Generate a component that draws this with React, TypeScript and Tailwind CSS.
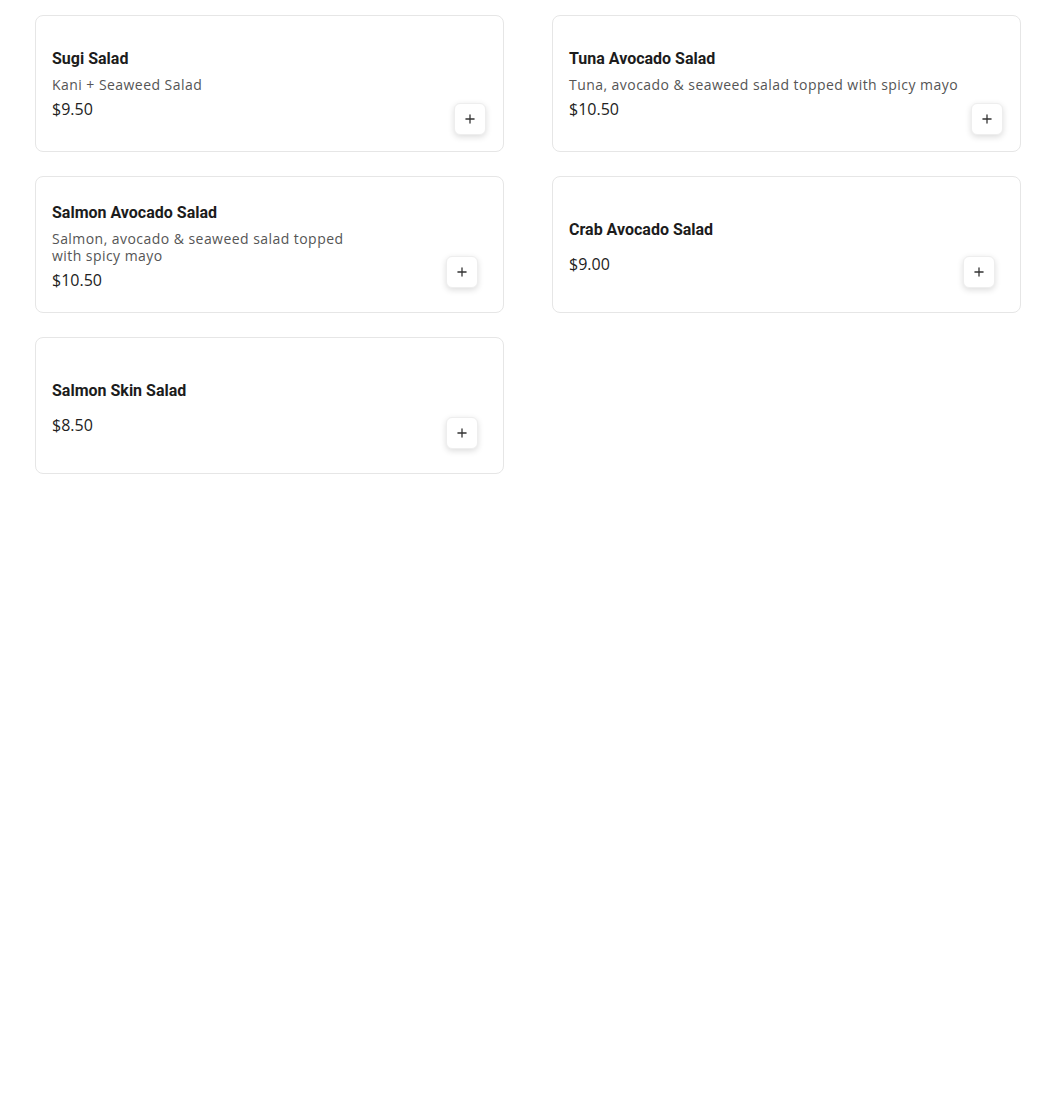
import { Plus } from "lucide-react";

type Item = {
  name: string;
  desc?: string[];
  price: string;
  wide?: boolean;
};

const ITEMS: Item[] = [
  { name: "Sugi Salad", desc: ["Kani + Seaweed Salad"], price: "$9.50", wide: true },
  { name: "Tuna Avocado Salad", desc: ["Tuna, avocado & seaweed salad topped with spicy mayo"], price: "$10.50", wide: true },
  { name: "Salmon Avocado Salad", desc: ["Salmon, avocado & seaweed salad topped", "with spicy mayo"], price: "$10.50" },
  { name: "Crab Avocado Salad", price: "$9.00" },
  { name: "Salmon Skin Salad", price: "$8.50" },
];

const bodyFont = { fontFamily: '"Open Sans", "DejaVu Sans", sans-serif' };

function MenuCard({ item }: { item: Item }) {
  return (
    <div
      className={
        (item.wide ? "pt-[2px]" : "pt-[6px]") +
        " relative flex h-[137px] items-center rounded-lg border border-[#e6e6e6] bg-white px-4"
      }
    >
      <div className="flex flex-col">
        <div className="text-[16px] leading-5 font-bold text-[#1c1c1c]" style={{ fontFamily: "Roboto, sans-serif" }}>
          {item.name}
        </div>
        {item.desc ? (
          <div className="mt-[7px] text-[14px] leading-[17px] tracking-[0.45px] text-[#555555]" style={bodyFont}>
            {item.desc.map((l) => (
              <div key={l}>{l}</div>
            ))}
          </div>
        ) : null}
        <div
          className={(item.desc ? "mt-[4px]" : "mt-[12px]") + " text-[16px] leading-6 text-[#222222]"}
          style={bodyFont}
        >
          {item.price}
        </div>
      </div>
      <button
        type="button"
        className={
          (item.wide ? "right-[17px] bottom-[16px]" : "right-[25px] bottom-[24px]") +
          " absolute flex h-8 w-8 items-center justify-center rounded-md border border-[#eeeeee] bg-white text-[#333333] shadow-[0_2px_6px_rgba(0,0,0,0.14)]"
        }
      >
        <Plus size={14} strokeWidth={2.2} />
      </button>
    </div>
  );
}

export default function App() {
  return (
    <div className="min-h-[1100px] bg-white pt-[15px] pl-[35px]">
      <div className="grid grid-cols-[469px_469px] gap-x-[48px] gap-y-[24px]">
        {ITEMS.map((it) => (
          <MenuCard key={it.name} item={it} />
        ))}
      </div>
    </div>
  );
}
